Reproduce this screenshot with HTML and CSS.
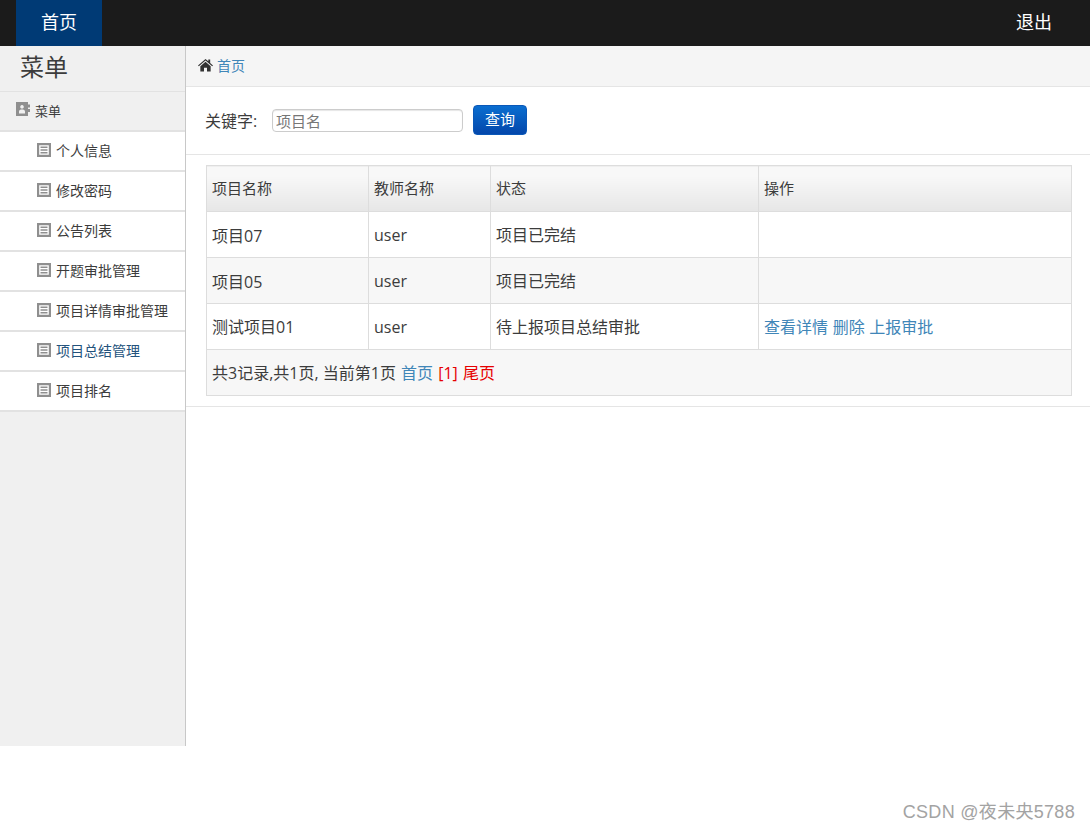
FILE: index.html
```html
<!DOCTYPE html>
<html lang="zh">
<head>
<meta charset="utf-8">
<title>首页</title>
<link rel="stylesheet" href="styles.css">
</head>
<body>
<header class="navbar">
  <a class="nav-home">首页</a>
  <a class="nav-exit">退出</a>
</header>
<div class="layout">
  <aside class="sidebar">
    <div class="side-title">菜单</div>
    <div class="side-group">
      <svg class="i-book" viewBox="0 0 14 14"><path fill="#8f8f8f" fill-rule="evenodd" d="M0 0h12v2.500h2v3h-2v1.500h2v3h-2v4H0zM6 3a1.800 1.800 0 1 0 .01 0zM3 11.500h6V9.500C9 8 7.500 7.500 6 7.500S3 8 3 9.500z"/></svg>
      <span>菜单</span>
    </div>
    <ul class="side-list">
      <li class="side-item"><svg class="i-doc" viewBox="0 0 14 14"><path fill="#8f8f8f" fill-rule="evenodd" d="M0 0h14v14H0zM2.200 2.200v9.600h9.600V2.200zM3.500 3.500h7v1.500h-7zM3.500 6.200h7v1.500h-7zM3.500 8.900h7v1.500h-7z"/></svg><span>个人信息</span></li>
      <li class="side-item"><svg class="i-doc" viewBox="0 0 14 14"><path fill="#8f8f8f" fill-rule="evenodd" d="M0 0h14v14H0zM2.200 2.200v9.600h9.600V2.200zM3.500 3.500h7v1.500h-7zM3.500 6.200h7v1.500h-7zM3.500 8.900h7v1.500h-7z"/></svg><span>修改密码</span></li>
      <li class="side-item"><svg class="i-doc" viewBox="0 0 14 14"><path fill="#8f8f8f" fill-rule="evenodd" d="M0 0h14v14H0zM2.200 2.200v9.600h9.600V2.200zM3.500 3.500h7v1.500h-7zM3.500 6.200h7v1.500h-7zM3.500 8.900h7v1.500h-7z"/></svg><span>公告列表</span></li>
      <li class="side-item"><svg class="i-doc" viewBox="0 0 14 14"><path fill="#8f8f8f" fill-rule="evenodd" d="M0 0h14v14H0zM2.200 2.200v9.600h9.600V2.200zM3.500 3.500h7v1.500h-7zM3.500 6.200h7v1.500h-7zM3.500 8.900h7v1.500h-7z"/></svg><span>开题审批管理</span></li>
      <li class="side-item"><svg class="i-doc" viewBox="0 0 14 14"><path fill="#8f8f8f" fill-rule="evenodd" d="M0 0h14v14H0zM2.200 2.200v9.600h9.600V2.200zM3.500 3.500h7v1.500h-7zM3.500 6.200h7v1.500h-7zM3.500 8.900h7v1.500h-7z"/></svg><span>项目详情审批管理</span></li>
      <li class="side-item active"><svg class="i-doc" viewBox="0 0 14 14"><path fill="#8f8f8f" fill-rule="evenodd" d="M0 0h14v14H0zM2.200 2.200v9.600h9.600V2.200zM3.500 3.500h7v1.500h-7zM3.500 6.200h7v1.500h-7zM3.500 8.900h7v1.500h-7z"/></svg><span>项目总结管理</span></li>
      <li class="side-item"><svg class="i-doc" viewBox="0 0 14 14"><path fill="#8f8f8f" fill-rule="evenodd" d="M0 0h14v14H0zM2.200 2.200v9.600h9.600V2.200zM3.500 3.500h7v1.500h-7zM3.500 6.200h7v1.500h-7zM3.500 8.900h7v1.500h-7z"/></svg><span>项目排名</span></li>
    </ul>
  </aside>
  <main class="content">
    <nav class="breadcrumb">
      <svg class="i-home" viewBox="0 0 16 14"><path fill="#333" d="M8 0.500l3 2.600V1.200h2v3.600l3 2.600-.9 1L8 2.300 0.900 8.400 0 7.400zM8 3.600l5.500 4.800V14H9.600V9.800H6.400V14H2.500V8.400z"/></svg>
      <a class="link">首页</a>
    </nav>
    <form class="search">
      <label class="search-label">关键字:</label>
      <input class="search-input" type="text" placeholder="项目名">
      <button class="search-btn" type="button">查询</button>
    </form>
    <section class="table-wrap">
      <table class="grid">
        <colgroup>
          <col class="c1"><col class="c2"><col class="c3"><col class="c4">
        </colgroup>
        <thead>
          <tr><th>项目名称</th><th>教师名称</th><th>状态</th><th>操作</th></tr>
        </thead>
        <tbody>
          <tr><td class="latin">项目07</td><td class="latin">user</td><td>项目已完结</td><td></td></tr>
          <tr class="odd"><td class="latin">项目05</td><td class="latin">user</td><td>项目已完结</td><td></td></tr>
          <tr><td>测试项目01</td><td class="latin">user</td><td>待上报项目总结审批</td><td><a class="link">查看详情</a> <a class="link op">删除</a> <a class="link op">上报审批</a></td></tr>
          <tr class="odd"><td colspan="4">共3记录,共1页, 当前第1页 <a class="link pg">首页</a> <span class="red pg">[1]</span> <span class="red pg">尾页</span></td></tr>
        </tbody>
      </table>
    </section>
  </main>
</div>
<div class="watermark">CSDN @夜未央5788</div>
</body>
</html>
```
FILE: styles.css
```css
* { box-sizing: border-box; }
html, body { margin: 0; padding: 0; }
body {
  position: relative;
  height: 830px;
  overflow: hidden;
  background: #fff;
  color: #3c3c3c;
  font-family: "Open Sans", "Noto Sans CJK SC", sans-serif;
  font-size: 14px;
}
.navbar {
  display: flex;
  justify-content: space-between;
  align-items: stretch;
  height: 46px;
  padding: 0 38px 0 16px;
  background: #1b1b1b;
  color: #fff;
  font-size: 18px;
}
.nav-home {
  display: flex;
  align-items: center;
  justify-content: center;
  width: 86px;
  padding-bottom: 5px;
  background: #003a75;
}
.nav-exit { display: flex; align-items: center; padding-bottom: 5px; }
.layout { display: flex; height: 700px; }
.sidebar {
  flex: 0 0 186px;
  background: #f0f0f0;
  border-right: 1px solid #c8c8c8;
}
.side-title {
  height: 46px;
  padding-left: 20px;
  font-size: 24px;
  line-height: 42px;
  border-bottom: 1px solid #e2e2e2;
}
.side-group {
  display: flex;
  align-items: center;
  gap: 5px;
  height: 40px;
  padding: 0 0 2px 16px;
  font-size: 13px;
  border-bottom: 2px solid #e2e2e2;
}
.i-book { width: 14px; height: 14px; margin-top: -2px; }
.side-list { margin: 0; padding: 0; list-style: none; }
.side-item {
  display: flex;
  align-items: center;
  gap: 5px;
  height: 40px;
  padding: 0 0 2px 37px;
  background: #fff;
  font-size: 14px;
  border-bottom: 2px solid #e2e2e2;
}
.side-item.active { color: #23527c; }
.i-doc { width: 14px; height: 14px; }
.content { flex: 1; }
.breadcrumb {
  display: flex;
  align-items: center;
  gap: 4px;
  height: 41px;
  padding: 0 0 2px 12px;
  background: #f5f5f5;
  font-size: 14px;
  border-bottom: 1px solid #e5e5e5;
}
.i-home { width: 15px; height: 14px; margin-top: -1px; }
.link { color: #4086b8; }
.search {
  display: flex;
  align-items: center;
  height: 68px;
  padding: 0 0 2px 19px;
  border-bottom: 1px solid #e5e5e5;
}
.search-label { width: 67px; font-size: 16px; }
.search-input {
  width: 191px;
  height: 23px;
  margin-top: 2px;
  padding: 0 3px;
  border: 1px solid #ccc;
  border-radius: 4px;
  box-shadow: inset 0 1px 1px rgba(0,0,0,.1);
  font: 15px "Open Sans", "Noto Sans CJK SC", sans-serif;
}
.search-input::placeholder { color: #777; }
.search-btn {
  width: 54px;
  height: 30px;
  margin-left: 10px;
  padding: 0 0 2px;
  border: 1px solid #0a58b8;
  border-radius: 4px;
  background: linear-gradient(#0a6ed0, #0447ab);
  color: #fff;
  font: 15px "Open Sans", "Noto Sans CJK SC", sans-serif;
}
.table-wrap {
  padding: 10px 18px 10px 20px;
  border-bottom: 1px solid #e5e5e5;
}
.grid {
  width: 865px;
  table-layout: fixed;
  border-collapse: collapse;
  font-size: 16px;
}
.c1 { width: 162px; }
.c2 { width: 122px; }
.c3 { width: 268px; }
.c4 { width: 313px; }
.grid th, .grid td {
  height: 46px;
  padding: 0 5px 2px;
  border: 1px solid #ddd;
  text-align: left;
  font-weight: 400;
}
.grid th {
  font-size: 15px;
  background: linear-gradient(#f8f8f8 20%, #e6e6e6);
}
.grid td.latin { padding-bottom: 0; }
.op { margin-left: .5px; }
.pg { margin-left: 1px; }
.odd { background: #f7f7f7; }
.red { color: #e60000; }
.watermark {
  position: absolute;
  right: 15px;
  bottom: 7px;
  color: #a3a3a3;
  font-family: "Liberation Sans", "Noto Sans CJK SC", sans-serif;
  font-size: 18px;
  letter-spacing: .3px;
}
```
